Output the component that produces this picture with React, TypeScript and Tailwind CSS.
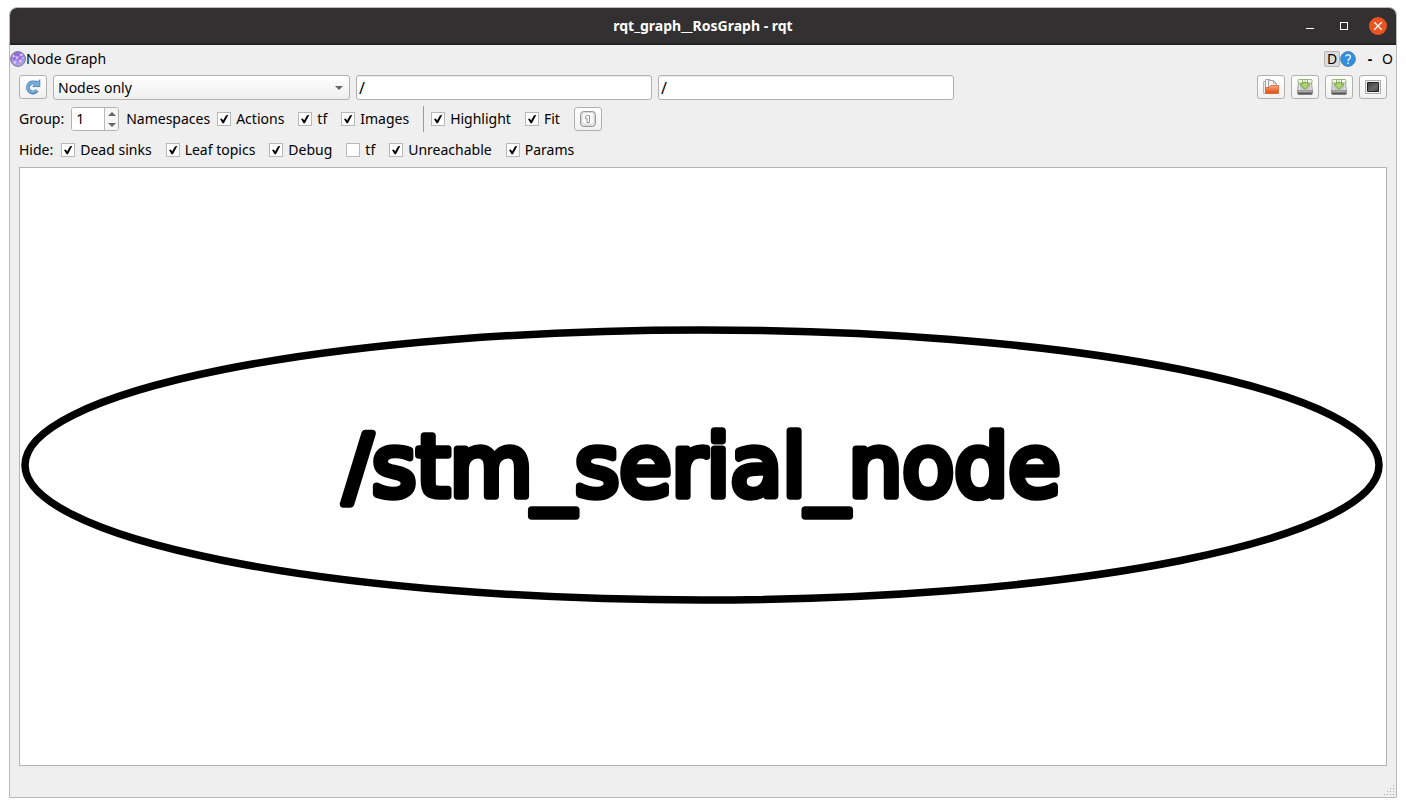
import { useState } from "react";
import type { ReactNode } from "react";

const toolButton =
  "flex h-[24px] w-[28px] shrink-0 items-center justify-center rounded-[3px] border border-[#b1b1b1] bg-linear-to-b from-white to-[#f1f1f1] active:bg-[#dddddd]";
const lineEdit =
  "h-[25px] w-[296px] min-w-0 rounded-[3px] border border-[#b1b1b1] bg-white px-[2px] text-[16px] text-black shadow-[inset_0_1px_0_#ececec] outline-none";

function ToolButton({ label, children }: { label: string; children: ReactNode }) {
  return (
    <button type="button" aria-label={label} className={toolButton}>
      {children}
    </button>
  );
}

function CheckItem({ label, checked = true }: { label: string; checked?: boolean }) {
  return (
    <label className="flex shrink-0 items-center gap-[5px]">
      <span className="grid h-[14px] w-[14px]">
        <input
          type="checkbox"
          defaultChecked={checked}
          className="peer col-start-1 row-start-1 h-[14px] w-[14px] appearance-none border border-[#b9b9b9] bg-white"
        />
        <svg viewBox="0 0 14 14" className="pointer-events-none invisible col-start-1 row-start-1 h-[14px] w-[14px] peer-checked:visible">
          <path d="M3 6.9 L4.9 6.5 L6.1 8.6 L8.9 3.4 L11.4 2.8 L6.9 11.3 L5.6 11.3 Z" fill="#000" />
        </svg>
      </span>
      {label}
    </label>
  );
}

function NodeGraphIcon() {
  return (
    <svg viewBox="0 0 16 16" className="h-[16px] w-[16px]" aria-hidden="true">
      <defs>
        <radialGradient id="orb" cx="0.45" cy="0.3" r="0.7">
          <stop offset="0" stopColor="#8f62dc" />
          <stop offset="0.6" stopColor="#a184e6" />
          <stop offset="1" stopColor="#b9b4f0" />
        </radialGradient>
      </defs>
      <circle cx="8" cy="8" r="7.4" fill="url(#orb)" stroke="#77718f" strokeWidth="1" />
      <path d="M3 5 L7 6.5 L11.5 3.5 M7 6.5 L5 11.5 L10.5 10 L13 7 M10.5 10 L10 13.5 M7 6.5 L10.5 10 M5 11.5 L2 9" stroke="#cdbdf5" strokeWidth="0.7" fill="none" />
      <g fill="#f3edff">
        <circle cx="3.4" cy="5" r="0.9" />
        <circle cx="7" cy="6.5" r="0.9" />
        <circle cx="11.5" cy="3.7" r="1" />
        <circle cx="5" cy="11.5" r="1" />
        <circle cx="10.5" cy="10" r="1" />
        <circle cx="13" cy="7" r="0.7" />
      </g>
    </svg>
  );
}

function RefreshIcon() {
  return (
    <svg viewBox="0 0 16 16" className="h-[16px] w-[16px]" aria-hidden="true">
      <path d="M12 11.4 A5 5 0 1 1 10.2 4" fill="none" stroke="#4580b6" strokeWidth="3.8" />
      <path d="M14.8 0.7 V7.6 H7.8 L9.9 5.5 L8.2 4.2 L10.9 1.8 L12.7 2.8 Z" fill="#78aedd" stroke="#4580b6" strokeWidth="0.9" />
      <path d="M11.5 11.1 A4.8 4.8 0 1 1 10.6 4.4" fill="none" stroke="#78aedd" strokeWidth="2.1" />
    </svg>
  );
}

function HelpIcon() {
  return (
    <svg viewBox="0 0 16 16" className="h-[16px] w-[16px]" aria-hidden="true">
      <circle cx="8" cy="8" r="7.4" fill="#2f90df" stroke="#5384ac" strokeWidth="1" />
      <path d="M5.7 5.5 C6 3.5 10.4 3.3 10.4 5.9 C10.4 7.7 8.1 7.8 8.1 10" fill="none" stroke="#fff" strokeWidth="1.3" />
      <circle cx="8.1" cy="12.1" r="0.9" fill="#fff" />
    </svg>
  );
}

function OpenIcon() {
  return (
    <svg viewBox="0 0 16 16" className="h-[16px] w-[16px]" aria-hidden="true">
      <defs>
        <linearGradient id="folder" x1="0" y1="0" x2="0" y2="1">
          <stop offset="0" stopColor="#f5b08e" />
          <stop offset="0.45" stopColor="#ee7a48" />
          <stop offset="1" stopColor="#df4a12" />
        </linearGradient>
      </defs>
      <path d="M0.5 2.5 H3 V14.5 H0.5 Z" fill="#eee" stroke="#b5b5b5" />
      <path d="M2.5 0.5 H7 L9.5 3 V10 H2.5 Z" fill="#fafafa" stroke="#a5a5a5" />
      <path d="M5.5 1.5 H10.5 L13.5 4.5 V10 H5.5 Z" fill="#f4f4f4" stroke="#a5a5a5" />
      <path d="M10.5 1.5 V4.5 H13.5" fill="none" stroke="#b0b0b0" />
      <path d="M2.5 14.5 V8.5 H6 L7.5 6.5 H15.5 V14.5 Z" fill="url(#folder)" stroke="#d95c2a" strokeWidth="0.8" />
    </svg>
  );
}

function SaveIcon({ id }: { id: string }) {
  return (
    <svg viewBox="0 0 16 16" className="h-[16px] w-[16px]" aria-hidden="true">
      <defs>
        <linearGradient id={id} x1="0" y1="0" x2="0" y2="1">
          <stop offset="0" stopColor="#d5d5d5" />
          <stop offset="0.4" stopColor="#8d8d8d" />
          <stop offset="1" stopColor="#2c2c2c" />
        </linearGradient>
      </defs>
      <path d="M1.7 2 H14.3 L15.4 12 H0.6 Z" fill="#e2e2e2" stroke="#999" strokeWidth="0.9" />
      <path d="M0.5 11.5 H15.5 V14 Q15.5 15.6 14 15.6 H2 Q0.5 15.6 0.5 14 Z" fill={`url(#${id})`} stroke="#707070" strokeWidth="0.6" />
      <ellipse cx="8" cy="8" rx="5.6" ry="3.4" fill="#c4c4c4" />
      <path d="M1 4 V1.5 Q1 0.5 2 0.5 H14 Q15 0.5 15 1.5 V4 H10.5 V1 H5.5 V4 Z" fill="#f7f9f3" stroke="#8fae6a" strokeWidth="0.9" />
      <path d="M5.5 3.4 H10.5 V5 H13 L8 10.6 L3 5 H5.5 Z" fill="#a9d46f" stroke="#72a23a" strokeWidth="0.9" />
      <path d="M6 1 H7.5 V3 H6 Z M8.5 1 H10 V3 H8.5 Z" fill="#f7fbef" />
    </svg>
  );
}

function ImageIcon() {
  return (
    <svg viewBox="0 0 16 16" className="h-[16px] w-[16px]" aria-hidden="true">
      <defs>
        <linearGradient id="screen" x1="0" y1="0" x2="1" y2="1">
          <stop offset="0" stopColor="#3c3c3c" />
          <stop offset="0.6" stopColor="#686868" />
          <stop offset="1" stopColor="#444" />
        </linearGradient>
      </defs>
      <path d="M0.5 1.5 H15.5 V14.5 H0.5 Z" fill="#f2f2f2" stroke="#a9a9a9" />
      <path d="M2.5 3.5 H13.5 V12.5 H2.5 Z" fill="url(#screen)" stroke="#222" />
    </svg>
  );
}

function FitIcon() {
  return (
    <svg viewBox="0 0 16 16" className="h-[16px] w-[16px]" aria-hidden="true">
      <rect x="0.6" y="0.6" width="14.8" height="14.8" rx="3" fill="#e6e6e6" stroke="#8c8c8c" strokeWidth="1" />
      <rect x="2.2" y="1.4" width="11.6" height="11.6" rx="2.2" fill="#fbfbfb" stroke="#cfcfcf" strokeWidth="0.7" />
      <path d="M7 11.5 V7.5 H5.5 V5.5 L7 4.5 H9.5 V11.5 Z" fill="#fff" stroke="#8d8d8d" strokeWidth="0.9" />
    </svg>
  );
}

function TitleBar() {
  return (
    <header className="grid h-[37px] shrink-0 grid-cols-[1fr_auto_1fr] items-center rounded-t-[7px] border-b-2 border-[#232122] bg-[#333031] px-[9px]">
      <h1 className="col-start-2 text-[14px] leading-5 font-bold text-white">rqt_graph__RosGraph - rqt</h1>
      <div className="flex items-center justify-end gap-4">
        <button type="button" aria-label="Minimize" className="flex h-[18px] w-[18px] items-center justify-center">
          <svg viewBox="0 0 18 18" className="h-[18px] w-[18px]">
            <path d="M5 11.5 H13" stroke="#fff" />
          </svg>
        </button>
        <button type="button" aria-label="Maximize" className="flex h-[18px] w-[18px] items-center justify-center">
          <svg viewBox="0 0 18 18" className="h-[18px] w-[18px]">
            <rect x="5.5" y="5.5" width="7" height="7" fill="none" stroke="#fff" />
          </svg>
        </button>
        <button type="button" aria-label="Close" className="flex h-[18px] w-[18px] items-center justify-center rounded-full bg-[#e95420]">
          <svg viewBox="0 0 18 18" className="h-[18px] w-[18px]">
            <path d="M5.3 5.3 L12.7 12.7 M12.7 5.3 L5.3 12.7" stroke="#fff" strokeWidth="1.3" />
          </svg>
        </button>
      </div>
    </header>
  );
}

function DockHeader() {
  return (
    <div className="flex h-[27px] shrink-0 items-center pr-[3px]">
      <NodeGraphIcon />
      <h2 className="flex-1">Node Graph</h2>
      <button type="button" aria-label="Dock options" className="flex h-[16px] w-[16px] items-center justify-center rounded-[2px] border border-[#b5b5b5] bg-[#dcdcdc] leading-4">
        D
      </button>
      <button type="button" aria-label="Help">
        <HelpIcon />
      </button>
      <button type="button" aria-label="Minimize panel" className="ml-[6px] w-[16px] text-center font-bold">
        -
      </button>
      <button type="button" aria-label="Float panel" className="w-[15px] text-right">
        O
      </button>
    </div>
  );
}

function SpinBox() {
  const [value, setValue] = useState(1);
  return (
    <div className="flex h-[24px] w-[48px] shrink-0 overflow-hidden rounded-[3px] border border-[#b1b1b1] bg-white">
      <input
        id="group-depth"
        type="number"
        value={value}
        onChange={(event) => setValue(Number(event.target.value))}
        className="w-0 min-w-0 flex-1 appearance-none bg-white pl-1 text-[14px] outline-none [-moz-appearance:textfield] [&::-webkit-inner-spin-button]:appearance-none"
      />
      <div className="flex w-[14px] flex-col border-l border-[#b9b9b9] bg-[#f5f5f5]">
        <button type="button" aria-label="Increase group" onClick={() => setValue(value + 1)} className="flex flex-1 items-center justify-center">
          <svg viewBox="0 0 8 4" className="h-[4px] w-[8px]">
            <path d="M0 4 L4 0 L8 4 Z" fill="#666" />
          </svg>
        </button>
        <button type="button" aria-label="Decrease group" onClick={() => setValue(value - 1)} className="flex flex-1 items-center justify-center">
          <svg viewBox="0 0 8 4" className="h-[4px] w-[8px]">
            <path d="M0 0 L4 4 L8 0 Z" fill="#666" />
          </svg>
        </button>
      </div>
    </div>
  );
}

function GraphView() {
  return (
    <main className="flex min-h-0 flex-1 border border-[#b5b5b5] bg-white">
      <svg viewBox="0 0 1366 597" className="h-full w-full" role="img" aria-label="Node graph">
        <ellipse cx="682" cy="297" rx="677" ry="135" fill="none" stroke="#000" strokeWidth="7.5" />
        <text
          x="682"
          y="328"
          textAnchor="middle"
          className="font-['DejaVu_Sans',sans-serif] text-[85px]"
          fill="#000"
          stroke="#000"
          strokeWidth="7.5"
          strokeLinejoin="round"
        >
          /stm_serial_node
        </text>
      </svg>
    </main>
  );
}

export default function App() {
  return (
    <div className="flex h-screen bg-white px-[9px] pt-[7px] pb-[9px] font-['Noto_Sans',sans-serif] text-[14px] leading-5 text-black">
      <div className="flex min-w-0 flex-1 flex-col rounded-t-[8px] border border-[#b9b9b9] bg-[#efefef]">
        <TitleBar />
        <DockHeader />
        <div className="flex min-h-0 flex-1 flex-col px-[9px] pt-[3px]">
          <div className="flex h-[25px] shrink-0 items-start gap-[6px]">
            <ToolButton label="Refresh graph">
              <RefreshIcon />
            </ToolButton>
            <div className="grid w-[297px] min-w-0">
              <select
                aria-label="Graph type"
                className="col-start-1 row-start-1 h-[25px] w-full appearance-none rounded-[3px] border border-[#b1b1b1] bg-linear-to-b from-white to-[#efefef] pl-1 outline-none"
              >
                <option>Nodes only</option>
                <option>Nodes/Topics (active)</option>
                <option>Nodes/Topics (all)</option>
              </select>
              <svg viewBox="0 0 8 4" className="pointer-events-none col-start-1 row-start-1 mr-[7px] h-[4px] w-[8px] self-center justify-self-end">
                <path d="M0 0 L4 4 L8 0 Z" fill="#666" />
              </svg>
            </div>
            <input aria-label="Node filter" type="text" defaultValue="/" className={lineEdit} />
            <input aria-label="Topic filter" type="text" defaultValue="/" className={lineEdit} />
            <div className="flex flex-1 justify-end gap-[6px]">
              <ToolButton label="Load DOT graph">
                <OpenIcon />
              </ToolButton>
              <ToolButton label="Save as DOT graph">
                <SaveIcon id="drive-dot" />
              </ToolButton>
              <ToolButton label="Save as SVG">
                <SaveIcon id="drive-svg" />
              </ToolButton>
              <ToolButton label="Save as image">
                <ImageIcon />
              </ToolButton>
            </div>
          </div>

          <div className="mt-[6px] flex h-[26px] shrink-0 items-center gap-[7px]">
            <label htmlFor="group-depth">Group:</label>
            <SpinBox />
            <span>Namespaces</span>
            <div className="flex items-center gap-[14px]">
              <CheckItem label="Actions" />
              <CheckItem label="tf" />
              <CheckItem label="Images" />
              <div className="flex items-center gap-[7px]">
                <div className="h-[26px] w-px bg-[#9c9c9c]" />
                <CheckItem label="Highlight" />
              </div>
              <CheckItem label="Fit" />
              <ToolButton label="Fit in view">
                <FitIcon />
              </ToolButton>
            </div>
          </div>

          <div className="mt-[8px] mb-[7px] flex h-[20px] shrink-0 items-center gap-[8px]">
            <span>Hide:</span>
            <div className="flex items-center gap-[14px]">
              <CheckItem label="Dead sinks" />
              <CheckItem label="Leaf topics" />
              <CheckItem label="Debug" />
              <CheckItem label="tf" checked={false} />
              <CheckItem label="Unreachable" />
              <CheckItem label="Params" />
            </div>
          </div>

          <GraphView />
        </div>
        <footer className="flex h-[31px] shrink-0 items-end justify-end p-[1px]">
          <svg viewBox="0 0 12 12" className="h-[12px] w-[12px]" aria-hidden="true">
            <path
              d="M10 1h1v1h-1z M7 4h1v1h-1z M10 4h1v1h-1z M4 7h1v1h-1z M7 7h1v1h-1z M10 7h1v1h-1z M1 10h1v1h-1z M4 10h1v1h-1z M7 10h1v1h-1z M10 10h1v1h-1z"
              fill="#a8a8a8"
            />
          </svg>
        </footer>
      </div>
    </div>
  );
}
